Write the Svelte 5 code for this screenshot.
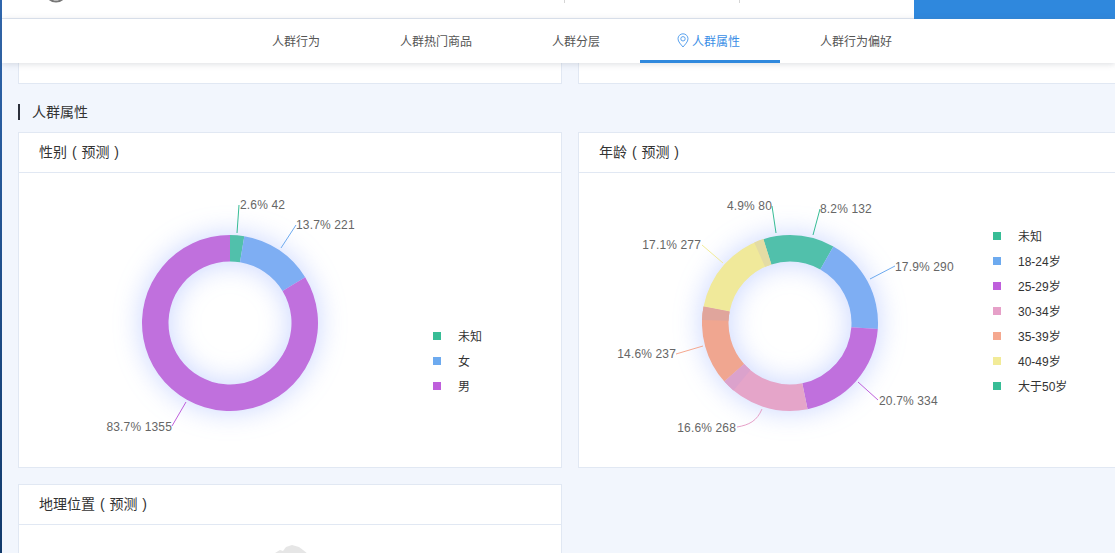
<script lang="ts">
	const tabs = ['人群行为', '人群热门商品', '人群分层', '人群属性', '人群行为偏好'];
	const activeTab = '人群属性';

	const CX = 211;
	const CY = 150;
	const R = 88;
	const r = 61.5;

	const green = '#51c0ab';
	const blue = '#7eaef3';
	const purple = '#c070dd';
	const pink = '#e5a5c9';
	const orange = '#f0a690';
	const yellow = '#f0e99a';

	// label: where the leader line goes (card-body coordinates), anchor for the text
	const genderChart = {
		title: '性别 ( 预测 )',
		slices: [
			{ pct: 2.6, color: green, line: 'M218 60 L220 32', text: '2.6% 42', x: 221, y: 32, anchor: 'start', stroke: '#37bd96' },
			{ pct: 13.7, color: blue, line: 'M262 75 L277 52', text: '13.7% 221', x: 277, y: 52, anchor: 'start', stroke: '#6daaef' },
			{ pct: 83.7, color: purple, line: 'M167 229 L153 253', text: '83.7% 1355', x: 153, y: 254, anchor: 'end', stroke: '#bf5fdc' }
		],
		patches: [],
		legend: [
			{ name: '未知', color: '#37bd96' },
			{ name: '女', color: '#6daaef' },
			{ name: '男', color: '#bf5fdc' }
		]
	};

	const ageChart = {
		title: '年龄 ( 预测 )',
		slices: [
			{ pct: 8.2, color: green, line: 'M234 62 L241 36', text: '8.2% 132', x: 241, y: 36, anchor: 'start', stroke: '#37bd96' },
			{ pct: 17.9, color: blue, line: 'M291 106 L316 93', text: '17.9% 290', x: 316, y: 94, anchor: 'start', stroke: '#6daaef' },
			{ pct: 20.7, color: purple, line: 'M279 209 L299 227', text: '20.7% 334', x: 300, y: 228, anchor: 'start', stroke: '#bf5fdc' },
			{ pct: 16.6, color: pink, line: 'M183 236 C178 248 170 252 158 254', text: '16.6% 268', x: 157, y: 255, anchor: 'end', stroke: '#e6a0c8' },
			{ pct: 14.6, color: orange, line: 'M124 173 L97 181', text: '14.6% 237', x: 97, y: 181, anchor: 'end', stroke: '#f5a88f' },
			{ pct: 17.1, color: yellow, line: 'M144 90 L123 72', text: '17.1% 277', x: 122, y: 72, anchor: 'end', stroke: '#f2eb98' },
			{ pct: 4.9, color: green, line: 'M197 60 L193 33', text: '4.9% 80', x: 193, y: 33, anchor: 'end', stroke: '#37bd96' }
		],
		patches: [
			{ from: 336, to: 342.4, color: '#e4dca4' },
			{ from: 272, to: 280.8, color: '#e0a59c' },
			{ from: 220, to: 228.3, color: '#dba2cc' }
		],
		legend: [
			{ name: '未知', color: '#37bd96' },
			{ name: '18-24岁', color: '#6daaef' },
			{ name: '25-29岁', color: '#bf5fdc' },
			{ name: '30-34岁', color: '#e6a0c8' },
			{ name: '35-39岁', color: '#f5a88f' },
			{ name: '40-49岁', color: '#f2eb98' },
			{ name: '大于50岁', color: '#37bd96' }
		]
	};

	function point(radius: number, deg: number) {
		const a = (deg * Math.PI) / 180;
		return `${(CX + radius * Math.sin(a)).toFixed(2)} ${(CY - radius * Math.cos(a)).toFixed(2)}`;
	}

	function arc(from: number, to: number) {
		const large = to - from > 180 ? 1 : 0;
		return `M${point(R, from)} A${R} ${R} 0 ${large} 1 ${point(R, to)} L${point(r, to)} A${r} ${r} 0 ${large} 0 ${point(r, from)} Z`;
	}

	function slicePaths(slices: { pct: number; color: string }[]) {
		const total = slices.reduce((sum, s) => sum + s.pct, 0);
		let at = 0;
		return slices.map((s) => {
			const from = at;
			at += (s.pct / total) * 360;
			return { d: arc(from, at), color: s.color };
		});
	}
</script>

<div class="page">
	<div class="edge"></div>
	<div class="main">
		<header class="top">
			<svg class="logo" width="24" height="4" viewBox="0 0 24 4">
				<circle cx="12" cy="-9" r="10.5" fill="none" stroke="#777" stroke-width="2" />
			</svg>
			<div class="tick first"></div>
			<div class="tick"></div>
			<div class="login"></div>
		</header>

		<nav class="tabs">
			{#each tabs as tab}
				<div class="tab" class:active={tab === activeTab}>
					{#if tab === activeTab}
						<svg class="pin" width="12" height="15" viewBox="0 0 12 15">
							<path d="M6 14 C4 11.5 1 8.8 1 5.8 A5 5 0 0 1 11 5.8 C11 8.8 8 11.5 6 14 Z" fill="none" stroke="#5aa2ee" stroke-width="1" />
							<circle cx="6" cy="5.8" r="2.2" fill="none" stroke="#5aa2ee" stroke-width="1" />
						</svg>
					{/if}
					{tab}
				</div>
			{/each}
		</nav>

		<div class="content">
			<div class="row stub-row">
				<div class="card stub"></div>
				<div class="card stub"></div>
			</div>

			<h2 class="section">人群属性</h2>

			<div class="row">
				{#each [genderChart, ageChart] as chart}
					<section class="card">
						<h3 class="card-title">{chart.title}</h3>
						<div class="card-body">
							<svg class="donut" width="414" height="294" viewBox="0 0 414 294">
								<g class="ring">
									{#each slicePaths(chart.slices) as p}
										<path d={p.d} fill={p.color} />
									{/each}
									{#each chart.patches as patch}
										<path d={arc(patch.from, patch.to)} fill={patch.color} />
									{/each}
								</g>
								{#each chart.slices as s}
									<path d={s.line} fill="none" stroke={s.stroke} stroke-width="1" />
									<text x={s.x} y={s.y} text-anchor={s.anchor} dominant-baseline="central">{s.text}</text>
								{/each}
							</svg>
							<ul class="legend">
								{#each chart.legend as item}
									<li>
										<span class="swatch" style="background: {item.color}"></span>
										{item.name}
									</li>
								{/each}
							</ul>
						</div>
					</section>
				{/each}
			</div>

			<div class="row">
				<section class="card">
					<h3 class="card-title">地理位置 ( 预测 )</h3>
					<div class="card-body map-body">
						<svg class="map" width="33" height="9" viewBox="0 0 33 9">
							<path d="M0 8 L5 5 L8 6 L11 2 L17 0 L24 2 L28 5 L33 9 L0 9 Z" fill="#e6e6e6" />
						</svg>
					</div>
				</section>
			</div>
		</div>
	</div>
</div>

<style>
	:global(body) {
		margin: 0;
		overflow: hidden;
	}

	.page {
		display: flex;
		height: 553px;
		overflow: hidden;
		font-family: 'Liberation Sans', 'Noto Sans CJK SC', sans-serif;
		font-size: 12px;
		color: #333;
		background: #f2f6fd;
	}

	.edge {
		width: 2px;
		flex-shrink: 0;
		background: linear-gradient(#2f66ad, #123a6b);
	}

	.main {
		flex: 1;
		min-width: 0;
		display: flex;
		flex-direction: column;
	}

	.top {
		height: 18px;
		flex-shrink: 0;
		display: flex;
		background: #fff;
		border-bottom: 1px solid #e1e8f3;
	}

	.logo {
		margin-left: 42px;
		flex-shrink: 0;
	}

	.tick {
		width: 1px;
		height: 3px;
		background: #d5d5d5;
		margin-left: 174px;
	}

	.tick.first {
		margin-left: 496px;
	}

	.login {
		width: 201px;
		height: 19px;
		margin-left: auto;
		background: #2f88dd;
	}

	.tabs {
		position: relative;
		z-index: 1;
		height: 44px;
		flex-shrink: 0;
		display: flex;
		padding-left: 230px;
		background: #fff;
		box-shadow: 0 1px 6px rgba(90, 100, 120, 0.22);
	}

	.tab {
		padding: 5px 40px 0;
		display: flex;
		align-items: center;
		line-height: 36px;
		color: #555;
		box-sizing: border-box;
		border-bottom: 3px solid transparent;
	}

	.tab.active {
		color: #3a8ee6;
		border-bottom-color: #2f88dd;
		padding-left: 37px;
	}

	.pin {
		margin-right: 3px;
		margin-top: -3px;
	}

	.content {
		padding: 0 0 0 16px;
		display: flex;
		flex-direction: column;
		gap: 16px;
		width: 1104px;
	}

	.row {
		display: flex;
		gap: 16px;
	}

	.card {
		width: 544px;
		flex-shrink: 0;
		box-sizing: border-box;
		background: #fff;
		border: 1px solid #e1e8f3;
	}

	.stub {
		height: 21px;
		border-top: 0;
	}

	.section {
		margin: 4px 0 -4px;
		height: 16px;
		line-height: 16px;
		padding-left: 12px;
		border-left: 2px solid #2b2f3a;
		font-size: 14px;
		font-weight: normal;
		color: #333;
	}

	.card-title {
		margin: 0;
		height: 39px;
		line-height: 39px;
		padding-left: 20px;
		font-size: 14px;
		font-weight: normal;
		word-spacing: 1px;
		color: #333;
		border-bottom: 1px solid #e1e8f3;
	}

	.card-body {
		height: 294px;
		display: flex;
		align-items: flex-end;
	}

	.donut {
		flex-shrink: 0;
	}

	.donut text {
		font-size: 12px;
		letter-spacing: 0.15px;
		fill: #666;
	}

	.ring {
		filter: drop-shadow(0 0 14px rgba(90, 130, 255, 0.34));
	}

	.legend {
		list-style: none;
		margin: 0 0 69px;
		padding: 0;
		display: flex;
		flex-direction: column;
	}

	.legend li {
		height: 25px;
		display: flex;
		align-items: center;
		gap: 17px;
		white-space: nowrap;
	}

	.swatch {
		width: 8px;
		height: 8px;
		flex-shrink: 0;
	}

	.map-body {
		justify-content: flex-start;
		align-items: flex-start;
	}

	.map {
		margin: 20px 0 0 256px;
		flex-shrink: 0;
	}
</style>
